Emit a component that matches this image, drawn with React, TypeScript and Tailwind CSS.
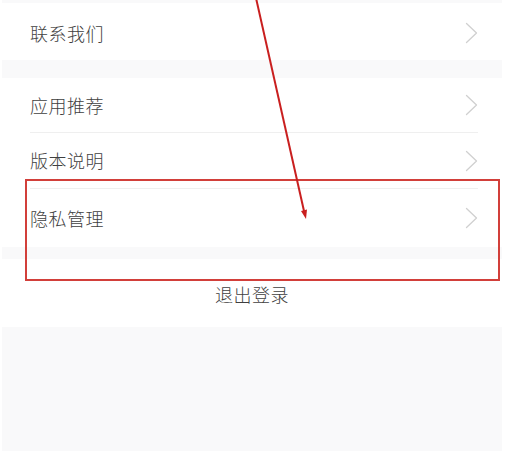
import React from "react";

const font = { fontFamily: '"Noto Sans CJK SC", "Noto Sans", sans-serif' };

function Chevron() {
  return (
    <svg width="13" height="22" viewBox="0 0 13 22" fill="none">
      <polyline
        points="1.5,1.5 11.5,11 1.5,20.5"
        stroke="#d0d0d0"
        strokeWidth="1.3"
        strokeLinecap="round"
        strokeLinejoin="round"
      />
    </svg>
  );
}

function Row({
  label,
  h,
  divider,
}: {
  label: string;
  h: string;
  divider?: boolean;
}) {
  return (
    <div className="pl-[28px] pr-[24px] bg-white">
      <div
        className={`${h} flex items-center justify-between ${
          divider ? "border-b border-[#efefef]" : ""
        }`}
      >
        <span className="text-[18px] font-light text-[#3f3f3f] tracking-[0.5px]">{label}</span>
        <Chevron />
      </div>
    </div>
  );
}

export default function App() {
  return (
    <div className="relative w-[505px] h-[451px] bg-white overflow-hidden" style={font}>
      <div className="ml-[2px] w-[500px] h-full bg-[#f9f9fa] pt-[3px] flex flex-col">
        {/* 联系我们 */}
        <div className="bg-white pt-[3px]">
          <Row label="联系我们" h="h-[54px]" />
        </div>

        {/* 列表 */}
        <div className="mt-[18px] flex flex-col">
          <Row label="应用推荐" h="h-[55px]" divider />
          <Row label="版本说明" h="h-[56px]" divider />
          <Row label="隐私管理" h="h-[58px]" />
        </div>

        {/* 退出登录 */}
        <div className="mt-[12px] bg-white h-[68px] flex justify-center pt-[26px]">
          <span className="text-[18px] leading-none font-light text-[#3f3f3f] tracking-[0.5px]">
            退出登录
          </span>
        </div>
      </div>

      {/* 标注框 */}
      <div className="absolute left-[25px] top-[179px] w-[475px] h-[102px] border-2 border-[#d23f3a]" />

      {/* 标注箭头 */}
      <svg
        className="absolute inset-0"
        width="505"
        height="451"
        viewBox="0 0 505 451"
      >
        <line x1="256" y1="-2" x2="304" y2="211" stroke="#c91f1f" strokeWidth="2" />
        <polygon points="306,219 307,209.5 301,211" fill="#c91f1f" />
      </svg>
    </div>
  );
}
